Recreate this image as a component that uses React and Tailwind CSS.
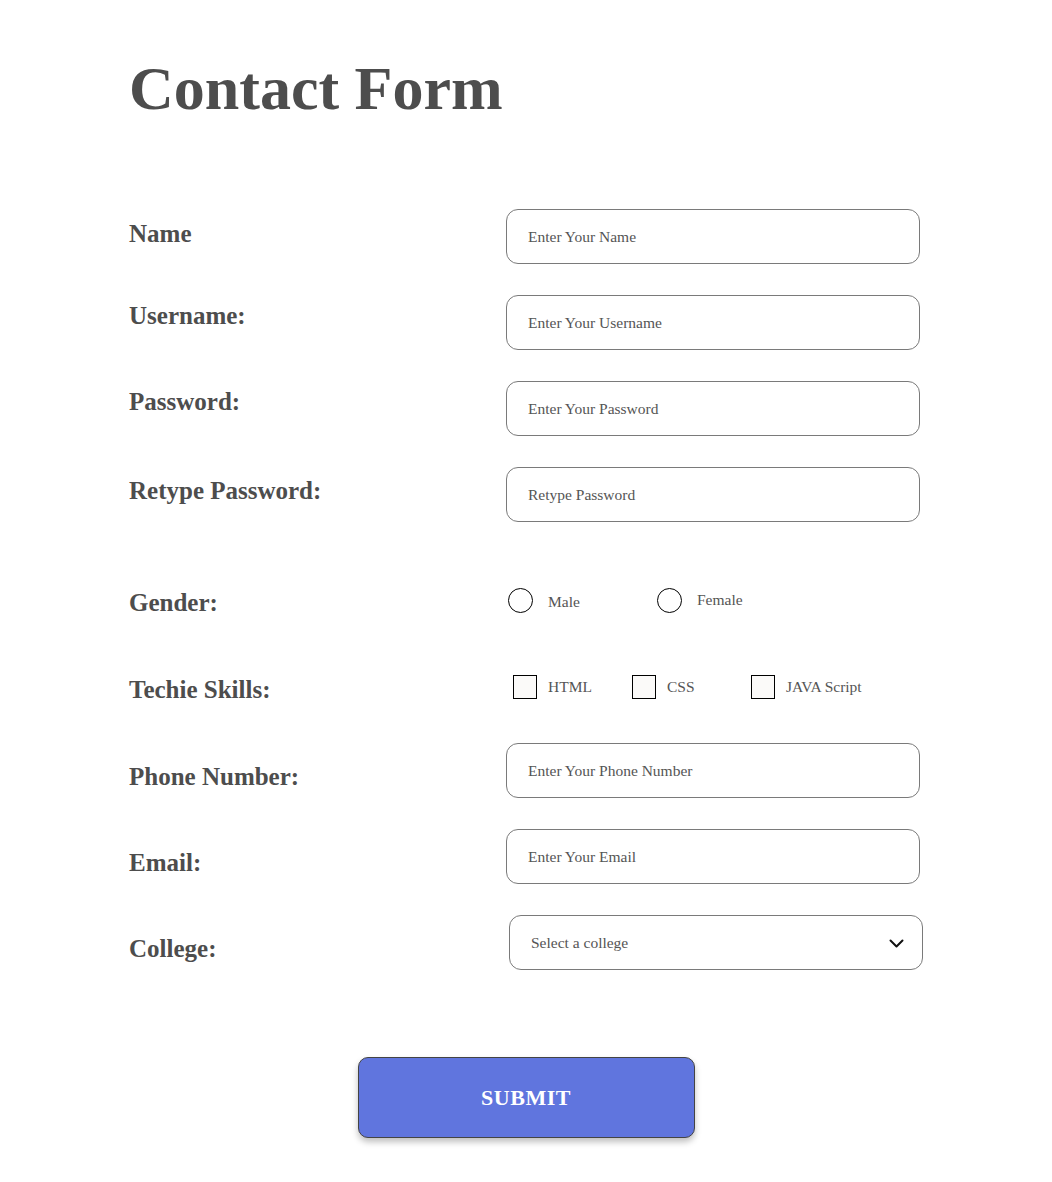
import { useState } from 'react';

const textFields = [
  { label: 'Name', placeholder: 'Enter Your Name', type: 'text', row: 'mt-[86px]', nudge: 'pb-[6px]' },
  { label: 'Username:', placeholder: 'Enter Your Username', type: 'text', row: 'mt-[31px]', nudge: 'pb-[14px]' },
  { label: 'Password:', placeholder: 'Enter Your Password', type: 'password', row: 'mt-[31px]', nudge: 'pb-[14px]' },
  { label: 'Retype Password:', placeholder: 'Retype Password', type: 'password', row: 'mt-[31px]', nudge: 'pb-[8px]' },
];

const contactFields = [
  { label: 'Phone Number:', placeholder: 'Enter Your Phone Number', type: 'tel', row: 'mt-[44px]' },
  { label: 'Email:', placeholder: 'Enter Your Email', type: 'email', row: 'mt-[31px]' },
];

const Label = ({ children, className = '' }) => (
  <label className={`w-[377px] shrink-0 text-[25px] font-bold leading-none ${className}`}>{children}</label>
);

const inputClass =
  'w-[414px] h-[55px] rounded-[12px] border border-[#7a7a7a] px-[21px] text-[15.5px] text-[#333] placeholder:text-[#555] outline-none';

export default function App() {
  const [gender, setGender] = useState('');
  const [skills, setSkills] = useState([]);

  const toggleSkill = (s) => {
    setSkills((prev) => (prev.includes(s) ? prev.filter((x) => x !== s) : [...prev, s]));
  };

  return (
    <div className="min-h-screen bg-white font-['Liberation_Serif',serif] text-[#4d4d4d]">
      <div className="pl-[129px] pt-[53px]">
        <h1 className="text-[62px] font-bold leading-[70px]">Contact Form</h1>

        <form onSubmit={(e) => e.preventDefault()}>
          {textFields.map((f) => (
            <div key={f.label} className={`flex items-center ${f.row}`}>
              <Label className={f.nudge}>{f.label}</Label>
              <input type={f.type} placeholder={f.placeholder} className={inputClass} />
            </div>
          ))}

          <div className="flex items-center mt-[66px] h-[24px]">
            <Label className="pt-[4px]">Gender:</Label>
            <div className="flex items-center">
              {['Male', 'Female'].map((g) => (
                <label key={g} className="flex items-center w-[149px] cursor-pointer">
                  <input
                    type="radio"
                    name="gender"
                    checked={gender === g}
                    onChange={() => setGender(g)}
                    className="appearance-none w-[25px] h-[25px] rounded-full border-[1.5px] border-black checked:bg-[#6075de] ml-[2px]"
                  />
                  <span className={`ml-[15px] text-[15.5px] text-[#555] ${g === 'Male' ? 'pt-[3px]' : ''}`}>{g}</span>
                </label>
              ))}
            </div>
          </div>

          <div className="flex items-center mt-[63px] h-[24px]">
            <Label className="pt-[4px]">Techie Skills:</Label>
            <div className="flex items-center pl-[7px]">
              {['HTML', 'CSS', 'JAVA Script'].map((s) => (
                <label key={s} className="flex items-center w-[119px] cursor-pointer">
                  <input
                    type="checkbox"
                    checked={skills.includes(s)}
                    onChange={() => toggleSkill(s)}
                    className="appearance-none w-[24px] h-[24px] border-[1.5px] border-black bg-[#fbfaf9] checked:bg-[#6075de]"
                  />
                  <span className="ml-[11px] text-[15.5px] text-[#555]">{s}</span>
                </label>
              ))}
            </div>
          </div>

          {contactFields.map((f) => (
            <div key={f.label} className={`flex items-center ${f.row}`}>
              <Label className="pt-[12px]">{f.label}</Label>
              <input type={f.type} placeholder={f.placeholder} className={inputClass} />
            </div>
          ))}

          <div className="flex items-center mt-[31px]">
            <Label className="pt-[12px]">College:</Label>
            <div className="relative ml-[3px]">
              <select
                defaultValue=""
                className="appearance-none w-[414px] h-[55px] rounded-[12px] border border-[#7a7a7a] bg-white px-[21px] text-[15.5px] text-[#555] outline-none"
              >
                <option value="" disabled>Select a college</option>
                <option>MIT</option>
                <option>Stanford</option>
                <option>Harvard</option>
              </select>
              <svg
                className="pointer-events-none absolute right-[19px] top-[24px]"
                width="15"
                height="9"
                viewBox="0 0 15 9"
                fill="none"
              >
                <path d="M1.5 1.5L7.5 7.5L13.5 1.5" stroke="#111" strokeWidth="2" strokeLinecap="round" strokeLinejoin="round" />
              </svg>
            </div>
          </div>
        </form>
      </div>

      <div className="flex justify-center mt-[87px] pb-[44px]">
        <button
          type="submit"
          className="w-[337px] h-[81px] rounded-[10px] border border-[#444] bg-[#6075de] text-white text-[22px] font-bold tracking-[0.5px] shadow-[0_4px_6px_rgba(0,0,0,0.25)]"
        >
          SUBMIT
        </button>
      </div>
    </div>
  );
}
